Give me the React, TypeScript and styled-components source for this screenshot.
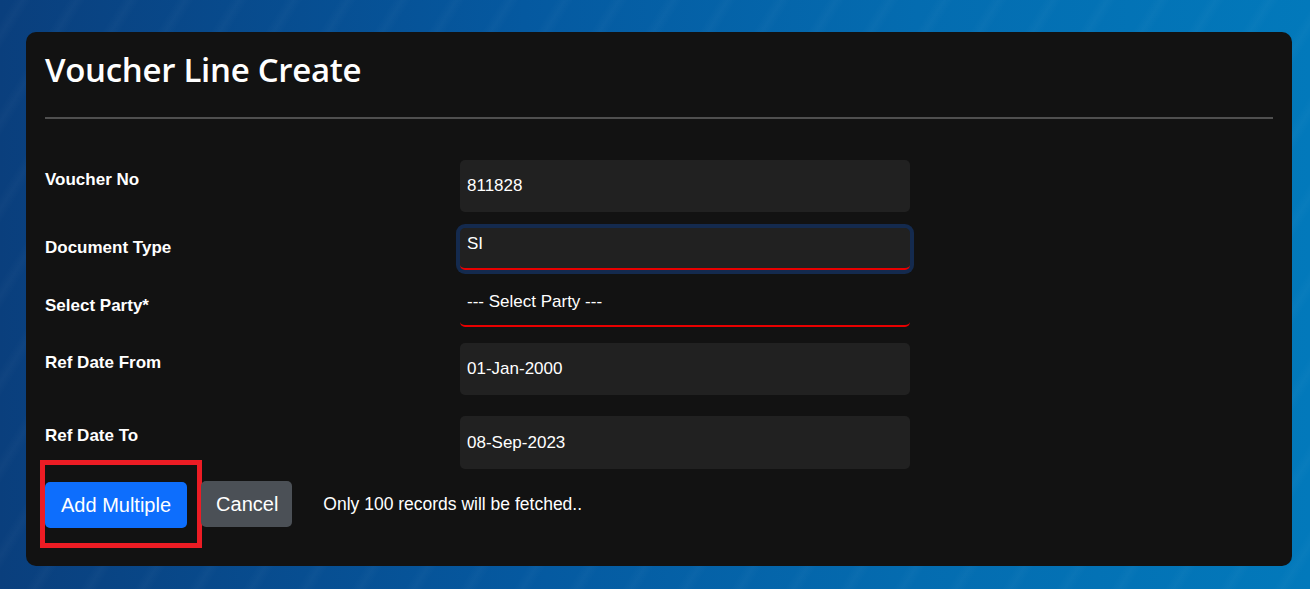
import styled, { createGlobalStyle } from "styled-components";

const GlobalStyle = createGlobalStyle`
  html, body {
    margin: 0;
    padding: 0;
  }
  body {
    font-family: "Liberation Sans", Arial, sans-serif;
  }
  * {
    box-sizing: border-box;
  }
`;

const Page = styled.div`
  width: 1310px;
  height: 589px;
  padding: 32px 18px 23px 26px;
  background:
    repeating-linear-gradient(
      -58deg,
      rgba(255, 255, 255, 0) 0px,
      rgba(255, 255, 255, 0) 16px,
      rgba(255, 255, 255, 0.025) 24px,
      rgba(255, 255, 255, 0) 32px,
      rgba(255, 255, 255, 0) 46px
    ),
    linear-gradient(90deg, #0a3f7d 0%, #0559a0 40%, #046cb0 70%, #0279bb 100%);
  overflow: hidden;
`;

const Card = styled.div`
  height: 100%;
  background: #121212;
  border-radius: 10px;
  padding: 0 19px;
  color: #fff;
`;

const Header = styled.div`
  height: 87px;
  border-bottom: 2px solid #4f4f4f;
  display: flex;
  align-items: flex-start;
`;

const Title = styled.h1`
  margin: 16px 0 0;
  font-family: "Open Sans", "Noto Sans", sans-serif;
  font-weight: 600;
  font-size: 33px;
  letter-spacing: -0.3px;
  line-height: 44px;
`;

const Form = styled.div`
  padding-top: 41px;
  display: flex;
  flex-direction: column;
`;

const Row = styled.div<{ $gap: number }>`
  display: grid;
  grid-template-columns: 415px 450px;
  margin-bottom: ${(p) => p.$gap}px;
`;

const Label = styled.label`
  padding-top: 8px;
  font-size: 17px;
  font-weight: 700;
  line-height: 24px;
`;

const Field = styled.div<{ $h: number; $lift?: number; $error?: boolean; $focus?: boolean; $plain?: boolean }>`
  height: ${(p) => p.$h}px;
  background: ${(p) => (p.$plain ? "transparent" : "#212121")};
  border-radius: 5px;
  padding: 0 7px ${(p) => p.$lift ?? 0}px;
  display: flex;
  align-items: center;
  font-size: 17px;
  color: #fff;
  border-bottom: ${(p) => (p.$error ? "2px solid #e80000" : "none")};
  box-shadow: ${(p) => (p.$focus ? "0 0 0 4px #142a4e" : "none")};
`;

const Actions = styled.div`
  margin-top: -9px;
  display: flex;
  align-items: center;
`;

const Highlight = styled.div`
  margin-left: -5px;
  padding: 17px 10px 15px 0;
  border: 5px solid #ec1c24;
`;

const Button = styled.button<{ $variant: "primary" | "secondary" }>`
  height: 46px;
  border: none;
  border-radius: 5px;
  padding: ${(p) => (p.$variant === "primary" ? "0 16px" : "0 14px 0 15px")};
  margin-left: ${(p) => (p.$variant === "primary" ? 0 : -1)}px;
  font-family: "Liberation Sans", Arial, sans-serif;
  font-size: 20px;
  color: #fff;
  background: ${(p) => (p.$variant === "primary" ? "#0d6efd" : "#4b5056")};
`;

const Note = styled.span`
  margin-left: 31px;
  font-size: 17.5px;
  color: #fff;
`;

export default function App() {
  return (
    <>
      <GlobalStyle />
      <Page>
        <Card>
          <Header>
            <Title>Voucher Line Create</Title>
          </Header>
          <Form>
            <Row $gap={16}>
              <Label>Voucher No</Label>
              <Field $h={52}>811828</Field>
            </Row>
            <Row $gap={16}>
              <Label>Document Type</Label>
              <Field $h={42} $lift={8} $error $focus>
                SI
              </Field>
            </Row>
            <Row $gap={16}>
              <Label>Select Party*</Label>
              <Field $h={41} $lift={8} $error $plain>
                --- Select Party ---
              </Field>
            </Row>
            <Row $gap={21}>
              <Label>Ref Date From</Label>
              <Field $h={52}>01-Jan-2000</Field>
            </Row>
            <Row $gap={0}>
              <Label>Ref Date To</Label>
              <Field $h={53}>08-Sep-2023</Field>
            </Row>
            <Actions>
              <Highlight>
                <Button $variant="primary">Add Multiple</Button>
              </Highlight>
              <Button $variant="secondary">Cancel</Button>
              <Note>Only 100 records will be fetched..</Note>
            </Actions>
          </Form>
        </Card>
      </Page>
    </>
  );
}
